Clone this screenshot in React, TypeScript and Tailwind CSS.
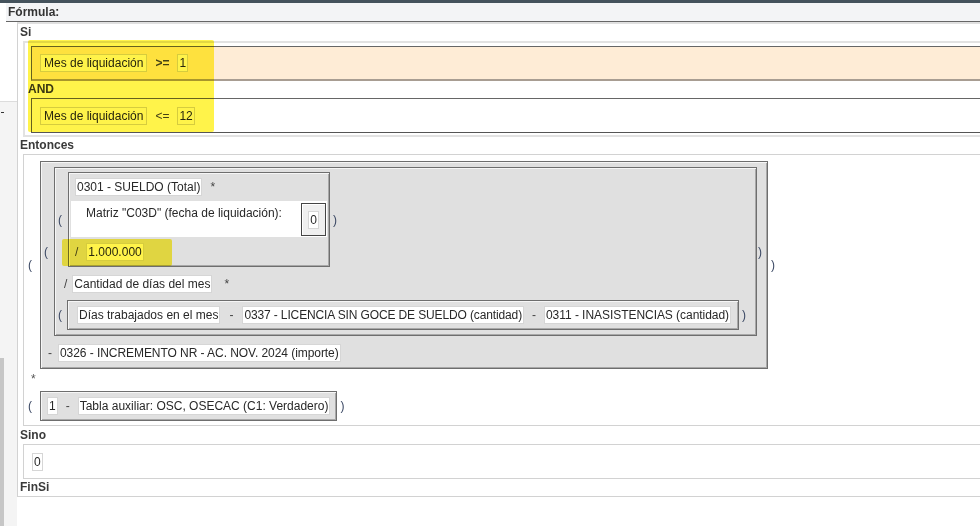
import type { ReactNode } from 'react'

function Chip({ children, wide = false, className = '' }: { children: ReactNode; wide?: boolean; className?: string }) {
  return (
    <span
      className={`inline-block whitespace-nowrap border border-[#d6d6d6] bg-white leading-[16px] ${wide ? 'px-[3px]' : 'px-[1px]'} ${className}`}
    >
      {children}
    </span>
  )
}

function Paren({ children, className = '' }: { children: ReactNode; className?: string }) {
  return <span className={`shrink-0 text-[#3b4864] ${className}`}>{children}</span>
}

function Op({ children, className = '' }: { children: ReactNode; className?: string }) {
  return <span className={`shrink-0 text-[#444] ${className}`}>{children}</span>
}

const box =
  'inline-flex flex-col border border-[#6e6e6e] bg-[#e0e0e0] shadow-[inset_1px_1px_0_#f6f6f6,inset_-1px_-1px_0_#a8a8a8]'

function Label({ children, className = 'h-[17px] leading-[17px]' }: { children: ReactNode; className?: string }) {
  return <div className={`pl-[2px] font-bold text-[#3a3a3a] ${className}`}>{children}</div>
}

function ConditionRow({ op, value, highlighted }: { op: string; value: string; highlighted?: boolean }) {
  return (
    <div
      className={`ml-[3px] flex h-[35px] items-center border-l border-t border-[#666] pl-[8px] ${
        highlighted ? 'border-b-2 border-b-[#a89d92] bg-[#feecd6]' : 'border-b border-b-[#555] bg-white'
      }`}
    >
      <Chip wide>Mes de liquidación</Chip>
      <Op className={op === '>=' ? 'mx-[8px] font-bold text-[#222]' : 'mx-[8px]'}>{op}</Op>
      <Chip>{value}</Chip>
    </div>
  )
}

export default function App() {
  return (
    <div className="relative h-[526px] w-[980px] overflow-hidden bg-white font-['Liberation_Sans',Arial,sans-serif] text-[12px] text-[#282828]">
      <div className="h-[3px] bg-[#44525c]" />
      <div className="flex">
        <div className="w-[6px]" />
        <div className="h-[19px] flex-1 border-b border-[#666] bg-[#f3f4f6] pl-[2px] font-bold leading-[18px] text-[#333]">
          Fórmula:
        </div>
      </div>

      <div className="flex h-[504px] items-start">
        {/* left edge of the page behind the editor */}
        <div className="flex h-full w-[17px] shrink-0 flex-col">
          <div className="h-[79px] bg-white" />
          <div className="h-px bg-[#dcdcdc]" />
          <div className="relative h-[256px] bg-[#f4f4f4]">
            <span className="absolute left-[1px] top-[10px] h-[1px] w-[3px] bg-[#333]" />
          </div>
          <div className="flex flex-1">
            <div className="w-[4px] bg-[#c6c6c6]" />
            <div className="flex-1 bg-[#f4f4f4]" />
          </div>
        </div>

        <div className="flex flex-1 flex-col border-b border-l border-t-2 border-[#d2d2d2] border-t-[#e0e0e0]">
          <Label>Si</Label>
          <div className="ml-[5px] border-2 border-r-0 border-[#e2e2e2] pb-[2px] pl-[3px] pt-[3px]">
            <ConditionRow op=">=" value="1" highlighted />
            <div className="h-[17px] font-bold leading-[17px] text-[#3a3a3a]">AND</div>
            <ConditionRow op="<=" value="12" />
          </div>

          <Label>Entonces</Label>
          <div className="ml-[5px] flex flex-col items-start border border-r-0 border-[#d2d2d2] pb-[4px] pl-[4px] pt-[6px]">
            <div className="flex items-center">
              <Paren className="w-[12px]">(</Paren>
              <div className={`${box} pb-[6px] pl-[3px] pr-[5px] pt-[5px]`}>
                <div className="flex items-center">
                  <Paren className="w-[10px]">(</Paren>
                  <div className={`${box} pb-[5px] pl-[3px] pr-[10px] pt-[4px]`}>
                    <div className="flex items-center">
                      <Paren className="w-[10px]">(</Paren>
                      <div className={`${box} px-[2px] pb-[5px] pt-[5px]`}>
                        <div className="flex items-center pl-[4px]">
                          <Chip>0301 - SUELDO (Total)</Chip>
                          <Op className="ml-[8px]">*</Op>
                        </div>
                        <div className="mt-[5px] flex h-[36px] w-[256px] items-start bg-white pl-[15px]">
                          <span className="pt-[5px] leading-[14px]">Matriz "C03D" (fecha de liquidación):</span>
                          <div className="ml-auto mr-[1px] mt-[2px] flex h-[33px] w-[25px] items-center justify-center border border-[#444] bg-[#efefef] shadow-[inset_1px_1px_0_#fff]">
                            <Chip>0</Chip>
                          </div>
                        </div>
                        <div className="mt-[6px] flex items-center pl-[4px]">
                          <Op className="mr-[8px]">/</Op>
                          <Chip>1.000.000</Chip>
                        </div>
                      </div>
                      <Paren className="ml-[3px]">)</Paren>
                    </div>

                    <div className="mt-[8px] flex items-center pl-[6px]">
                      <Op className="mr-[5px]">/</Op>
                      <Chip>Cantidad de días del mes</Chip>
                      <Op className="ml-[12px]">*</Op>
                    </div>

                    <div className="mt-[7px] flex items-center">
                      <Paren className="w-[9px]">(</Paren>
                      <div className={`${box} h-[30px] flex-row items-center pl-[9px] pr-[7px]`}>
                        <Chip>Días trabajados en el mes</Chip>
                        <Op className="mx-[9px]">-</Op>
                        <Chip className="tracking-[-0.13px]">0337 - LICENCIA SIN GOCE DE SUELDO (cantidad)</Chip>
                        <Op className="mx-[8px]">-</Op>
                        <Chip className="tracking-[-0.05px]">0311 - INASISTENCIAS (cantidad)</Chip>
                      </div>
                      <Paren className="ml-[3px]">)</Paren>
                    </div>
                  </div>
                  <Paren className="ml-[1px]">)</Paren>
                </div>

                <div className="mt-[8px] flex items-center pl-[4px]">
                  <Op className="mr-[6px]">-</Op>
                  <Chip className="tracking-[-0.06px]">0326 - INCREMENTO NR - AC. NOV. 2024 (importe)</Chip>
                </div>
              </div>
              <Paren className="ml-[3px]">)</Paren>
            </div>

            <div className="h-[22px] pl-[3px] leading-[20px] text-[#555]">*</div>

            <div className="flex items-center">
              <Paren className="w-[12px]">(</Paren>
              <div className={`${box} h-[30px] flex-row items-center pl-[6px] pr-[6px]`}>
                <Chip>1</Chip>
                <Op className="mx-[8px]">-</Op>
                <Chip>Tabla auxiliar: OSC, OSECAC (C1: Verdadero)</Chip>
              </div>
              <Paren className="ml-[3px]">)</Paren>
            </div>
          </div>

          <Label className="h-[18px] leading-[19px]">Sino</Label>
          <div className="ml-[5px] flex h-[35px] items-center border border-r-0 border-[#d2d2d2] pl-[8px]">
            <Chip>0</Chip>
          </div>
          <Label>FinSi</Label>
        </div>
      </div>

      {/* highlighter marks over the screenshot */}
      <div className="pointer-events-none absolute left-[28px] top-[40px] h-[92px] w-[186px] rounded-[2px] bg-[#fff34a] mix-blend-multiply" />
      <div className="pointer-events-none absolute left-[62px] top-[239px] h-[27px] w-[110px] rounded-[2px] bg-[#fff34a] mix-blend-multiply" />
    </div>
  )
}
